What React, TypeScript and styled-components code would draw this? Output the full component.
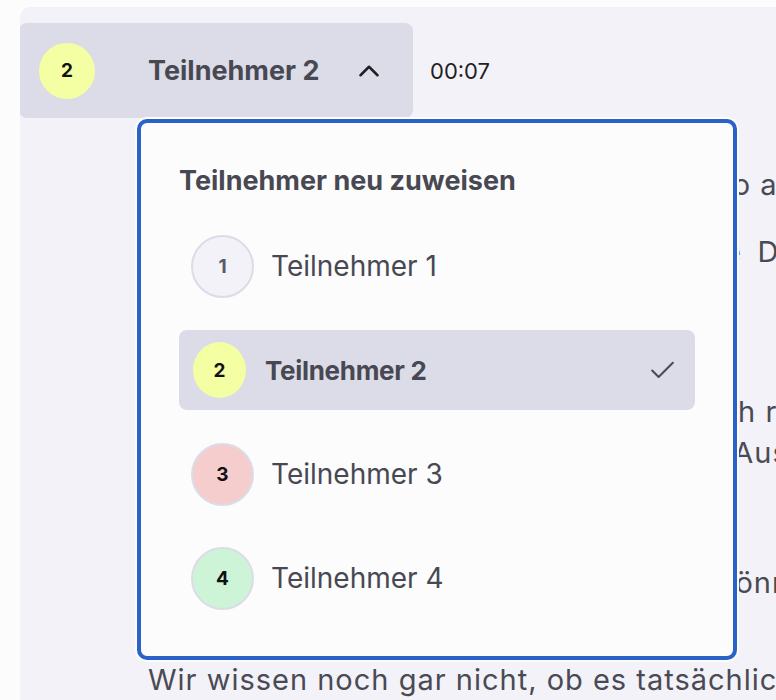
import React from "react";
import styled, { createGlobalStyle } from "styled-components";
import { ChevronUp, Check } from "lucide-react";

const GlobalStyle = createGlobalStyle`
  html, body {
    margin: 0;
    padding: 0;
    background: #fcfcfd;
    overflow: hidden;
  }
  body {
    font-family: Inter, "Noto Sans", sans-serif;
    color: #484852;
  }
`;

const Card = styled.main`
  margin: 7px 0 0 20px;
  min-height: 700px;
  background: #f3f2f8;
  border-radius: 10px 0 0 0;
  padding-top: 16px;
  overflow: hidden;
`;

const Segment = styled.section`
  position: relative;
`;

const HeaderRow = styled.div`
  display: flex;
  align-items: center;
  gap: 17px;
`;

const SpeakerButton = styled.button`
  all: unset;
  box-sizing: border-box;
  width: 394px;
  height: 95px;
  margin-left: -1px;
  padding: 0 36px 0 18px;
  display: flex;
  align-items: center;
  background: #dcdce8;
  border-radius: 8px;
  cursor: pointer;
`;

const Avatar = styled.span<{ $bg: string; $w: number; $h: number; $muted?: boolean }>`
  box-sizing: border-box;
  flex: none;
  width: ${(p) => p.$w}px;
  height: ${(p) => p.$h}px;
  border-radius: 50%;
  border: 2px solid #dcdce8;
  background: ${(p) => p.$bg};
  display: flex;
  align-items: center;
  justify-content: center;
  font-family: Inter, sans-serif;
  font-weight: 700;
  font-size: 19px;
  color: ${(p) => (p.$muted ? "#5a5a66" : "#111114")};
`;

const ButtonLabel = styled.span`
  margin-left: 51px;
  font-size: 27px;
  font-weight: 700;
  color: #484852;
  white-space: nowrap;
`;

const Chevron = styled.span`
  margin-left: auto;
  display: flex;
  color: #1f1f24;
  margin-right: -9px;
`;

const Time = styled.span`
  font-size: 22px;
  color: #1f1f24;
`;

const Transcript = styled.div`
  padding-left: 128px;
  width: 1200px;
  font-size: 29px;
  letter-spacing: 1px;
  line-height: 41px;
  color: #4a4a55;
`;

const Paragraph = styled.p<{ $top: number }>`
  margin: ${(p) => p.$top}px 0 0;
`;

const Line = styled.span`
  display: block;
  white-space: nowrap;
`;

const Panel = styled.div`
  position: absolute;
  top: 96px;
  left: 117px;
  width: 600px;
  box-sizing: border-box;
  padding: 43px 38px 38px;
  background: #fcfcfd;
  border: 4px solid #2a62c8;
  border-radius: 10px;
  box-shadow: 0 0 0 2px #fcfcfd;
  z-index: 2;
`;

const PanelTitle = styled.h2`
  margin: 0;
  font-size: 27px;
  line-height: 30px;
  font-weight: 700;
  color: #484852;
`;

const OptionList = styled.ul`
  list-style: none;
  margin: 30px 0 0;
  padding: 0;
  display: flex;
  flex-direction: column;
  gap: 24px;
`;

const Option = styled.li<{ $selected?: boolean }>`
  height: 80px;
  display: flex;
  align-items: center;
  gap: 17px;
  padding: 0 17px 0 12px;
  border-radius: 8px;
  background: ${(p) => (p.$selected ? "#dcdce8" : "transparent")};
  cursor: pointer;
`;

const OptionLabel = styled.span<{ $selected?: boolean }>`
  flex: 1;
  white-space: nowrap;
  font-size: ${(p) => (p.$selected ? "26px" : "28px")};
  font-weight: ${(p) => (p.$selected ? 700 : 400)};
  letter-spacing: ${(p) => (p.$selected ? "-0.3px" : "0")};
  color: #484852;
`;

const CheckMark = styled.span`
  display: flex;
  color: #4a4a55;
`;

const participants = [
  { id: 1, name: "Teilnehmer 1", color: "#f3f2f8", muted: true },
  { id: 2, name: "Teilnehmer 2", color: "#f4fea2" },
  { id: 3, name: "Teilnehmer 3", color: "#f5cdcc" },
  { id: 4, name: "Teilnehmer 4", color: "#cdf4d6" },
];

const paragraphs: { top: number; lines: string[] }[] = [
  { top: 46, lines: ["Ja, also ich denke, wir sollten das nun so angehen, wie wir es besprochen haben."] },
  { top: 26, lines: ["Ich glaube, dass wir erst einmal über die\u2009 Daten sprechen müssen,", "bevor wir weitermachen."] },
  {
    top: 78,
    lines: [
      "Aber ich bin mir nicht sicher, ob das auch reicht, was wir bisher haben.",
      "Wir bräuchten dafür einfach noch mehr Auswertungen und Zahlen.",
      "Das ist mein Eindruck.",
    ],
  },
  { top: 48, lines: ["Wir sollten das vorab klären, damit wir können, was wir wollen.", "Oder?"] },
  { top: 15, lines: ["Wir wissen noch gar nicht, ob es tatsächlich so kommen wird."] },
];

export default function App() {
  const selected = 2;
  return (
    <>
      <GlobalStyle />
      <Card>
        <Segment>
          <HeaderRow>
            <SpeakerButton type="button">
              <Avatar $bg="#f4fea2" $w={60} $h={60}>2</Avatar>
              <ButtonLabel>Teilnehmer 2</ButtonLabel>
              <Chevron>
                <ChevronUp size={34} strokeWidth={1.8} />
              </Chevron>
            </SpeakerButton>
            <Time>00:07</Time>
          </HeaderRow>
          <Transcript>
            {paragraphs.map((p, i) => (
              <Paragraph key={i} $top={p.top}>
                {p.lines.map((l, j) => (
                  <Line key={j}>{l}</Line>
                ))}
              </Paragraph>
            ))}
          </Transcript>
          <Panel>
            <PanelTitle>Teilnehmer neu zuweisen</PanelTitle>
            <OptionList>
              {participants.map((p) => {
                const isSel = p.id === selected;
                return (
                  <Option key={p.id} $selected={isSel}>
                    <Avatar $bg={p.color} $w={isSel ? 57 : 63} $h={isSel ? 60 : 63} $muted={p.muted}>
                      {p.id}
                    </Avatar>
                    <OptionLabel $selected={isSel}>{p.name}</OptionLabel>
                    {isSel && (
                      <CheckMark>
                        <Check size={31} strokeWidth={1.6} />
                      </CheckMark>
                    )}
                  </Option>
                );
              })}
            </OptionList>
          </Panel>
        </Segment>
      </Card>
    </>
  );
}
